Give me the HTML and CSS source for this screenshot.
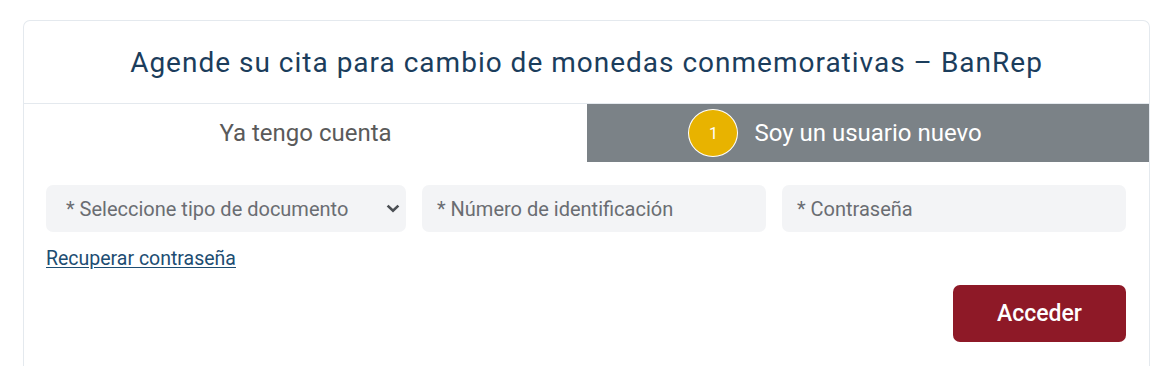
FILE: index.html
```html
<!DOCTYPE html>
<html lang="es">
<head>
<meta charset="utf-8">
<title>Agende su cita</title>
<link rel="stylesheet" href="styles.css">
</head>
<body>
<div class="card">
  <div class="card-header">
    <h1 class="title">Agende su cita para cambio de monedas conmemorativas – BanRep</h1>
  </div>
  <div class="tabs">
    <div class="tab tab-active">Ya tengo cuenta</div>
    <div class="tab tab-other"><span class="tab-label"><span class="badge">1</span>Soy un usuario nuevo</span></div>
  </div>
  <div class="form">
    <div class="fields">
      <div class="field field-select">
        <span class="placeholder">* Seleccione tipo de documento</span>
        <svg class="chevron" width="14" height="9" viewBox="0 0 14 9"><path d="M1.6 1.6 L7 6.8 L12.4 1.6" fill="none" stroke="#4b4f54" stroke-width="2.6"/></svg>
      </div>
      <div class="field"><span class="placeholder">* Número de identificación</span></div>
      <div class="field"><span class="placeholder">* Contraseña</span></div>
    </div>
    <a class="link" href="#">Recuperar contraseña</a>
    <div class="actions">
      <button class="btn">Acceder</button>
    </div>
  </div>
</div>
</body>
</html>
```
FILE: styles.css
```css
html, body {
  margin: 0;
  padding: 0;
  background: #ffffff;
  font-family: Roboto, "Liberation Sans", Arial, sans-serif;
}
body {
  padding: 20px 22px 0 23px;
  height: 366px;
  box-sizing: border-box;
  overflow: hidden;
}
.card {
  width: 1127px;
  box-sizing: border-box;
  border: 1px solid #e4e9ee;
  border-bottom: none;
  border-radius: 7px 7px 0 0;
  height: 346px;
}
.card-header {
  height: 82px;
  border-bottom: 1px solid #e4e9ee;
  display: flex;
  align-items: center;
  justify-content: center;
}
.title {
  margin: 0;
  font-weight: 400;
  font-size: 28px;
  color: #1b3d5c;
  letter-spacing: 1px;
  padding-top: 1px;
}
.tabs {
  display: grid;
  grid-template-columns: 563px 1fr;
  height: 58px;
}
.tab {
  display: flex;
  align-items: center;
  justify-content: center;
  font-size: 24px;
}
.tab-active {
  color: #5a5a5a;
  background: #ffffff;
}
.tab-other {
  background: #7b8287;
  color: #ffffff;
}
.tab-label {
  position: relative;
}
.badge {
  position: absolute;
  right: calc(100% + 16px);
  top: 50%;
  transform: translateY(-50%);
  width: 50px;
  height: 48px;
  box-sizing: border-box;
  border-radius: 50%;
  background: #e8b300;
  border: 1.5px solid #ffffff;
  color: #ffffff;
  font-size: 16px;
  display: flex;
  align-items: center;
  justify-content: center;
}
.form {
  padding: 23px 23px 0 22px;
}
.fields {
  display: grid;
  grid-template-columns: 360px 1fr 1fr;
  gap: 16px;
}
.field {
  height: 47px;
  background: #f3f4f6;
  border-radius: 7px;
  display: flex;
  align-items: center;
  padding: 0 15px;
  box-sizing: border-box;
}
.field-select {
  padding: 0 6px 0 20px;
  justify-content: space-between;
}
.placeholder {
  font-size: 20px;
  color: #6a6d72;
}
.chevron {
  display: block;
}
.link {
  display: inline-block;
  margin-top: 15px;
  font-size: 19.5px;
  color: #1d4d72;
  text-decoration: underline;
  text-underline-offset: 2px;
}
.actions {
  display: flex;
  justify-content: flex-end;
  margin-top: 15px;
}
.btn {
  width: 173px;
  height: 57px;
  border: none;
  border-radius: 7px;
  background: #8e1927;
  color: #ffffff;
  font-family: Roboto, "Liberation Sans", Arial, sans-serif;
  font-size: 23px;
  font-weight: 500;
}
```
